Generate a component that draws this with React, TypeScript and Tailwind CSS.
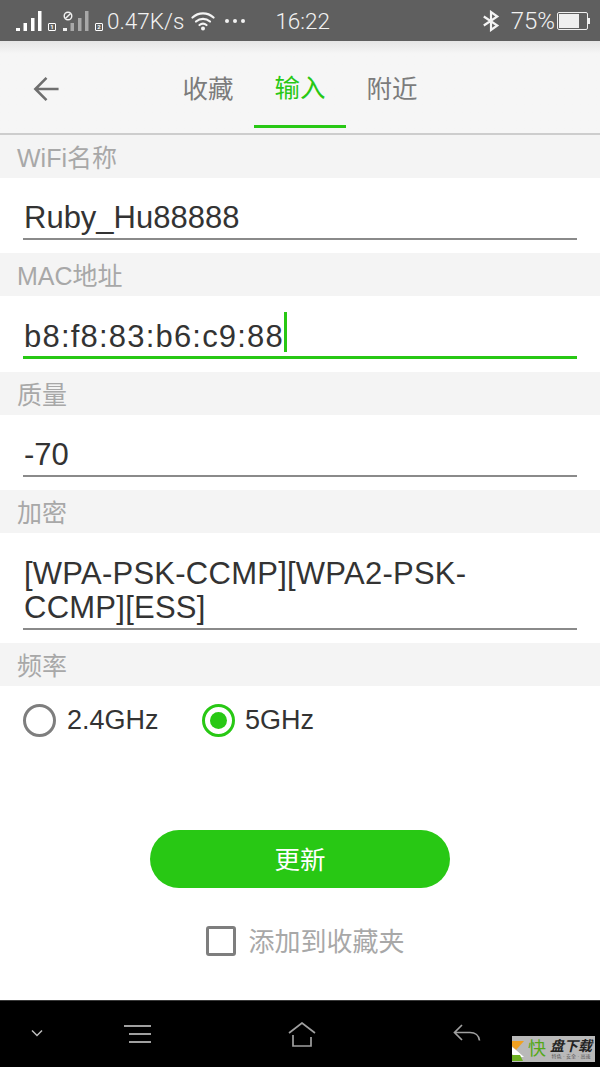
import React from 'react';

const sans = 'font-["Liberation_Sans","Noto_Sans_CJK_SC",sans-serif]';

function Signal({ light }: { light?: boolean }) {
  const c = light ? '#a8a8a8' : '#ffffff';
  return (
    <svg width="26" height="20" viewBox="0 0 26 20">
      <rect x="0" y="17" width="4" height="3" fill={light ? '#f0f0f0' : c} />
      <rect x="7.5" y="12" width="3.5" height="8" fill={c} />
      <rect x="15" y="7" width="3.5" height="13" fill={c} />
      <rect x="22" y="0" width="3.5" height="20" fill={c} />
    </svg>
  );
}

function SimBadge({ n }: { n: string }) {
  return (
    <span className="ml-[6px] flex h-[8px] w-[8px] items-center justify-center self-end rounded-[1px] border border-white text-[6px] font-bold leading-none text-white">
      {n}
    </span>
  );
}

function StatusBar() {
  return (
    <div className='relative flex h-[41px] shrink-0 items-center bg-[#5f5f5f] pl-[16px] pr-[10px] font-["Roboto",sans-serif] font-light text-[#f2f2f2]'>
      <div className="flex items-end">
        <Signal />
        <SimBadge n="1" />
      </div>
      <div className="relative ml-[7px] flex items-end">
        <Signal light />
        <SimBadge n="2" />
        <svg className="absolute left-0 top-0" width="10" height="10" viewBox="0 0 10 10" fill="none" stroke="#f2f2f2" strokeWidth="1.4">
          <circle cx="5" cy="5" r="3.8" />
          <path d="M2.4 7.6 7.6 2.4" />
        </svg>
      </div>
      <span className="ml-[4px] pt-[1px] text-[22.5px] leading-none">0.47K/s</span>
      <svg className="ml-[7px]" width="24" height="20" viewBox="0 0 24 20" fill="none" stroke="#f4f4f4" strokeWidth="2.2" strokeLinecap="round">
        <path d="M1.5 6.5C7.5 1 16.5 1 22.5 6.5" />
        <path d="M5 10.5c4.2-3.6 9.8-3.6 14 0" />
        <path d="M8.5 14c2.2-1.8 4.8-1.8 7 0" />
        <circle cx="12" cy="17.5" r="2" fill="#f4f4f4" stroke="none" />
      </svg>
      <div className="ml-[10px] flex gap-[4px]">
        <span className="h-[4px] w-[4px] rounded-full bg-[#f2f2f2]" />
        <span className="h-[4px] w-[4px] rounded-full bg-[#f2f2f2]" />
        <span className="h-[4px] w-[4px] rounded-full bg-[#f2f2f2]" />
      </div>
      <span className="ml-[30px] pt-[1px] text-[22.5px] leading-none">16:22</span>
      <svg className="ml-auto" width="18" height="22" viewBox="0 0 20 22" fill="none" stroke="#f4f4f4" strokeWidth="2.4">
        <path d="M2 6l15 10-7 5V1l7 5L2 16" />
      </svg>
      <span className="ml-[11px] pt-[1px] text-[24px] leading-none">75%</span>
      <div className="ml-[2px] flex items-center">
        <div className="flex h-[18px] w-[31px] items-stretch rounded-[2px] border border-[#f0f0f0] p-[1px]">
          <div className="w-[20px] bg-[#efefef]" />
        </div>
        <div className="h-[6px] w-[2px] bg-[#f0f0f0]" />
      </div>
    </div>
  );
}

function Tabs() {
  return (
    <div className="flex h-[94px] shrink-0 border-b-2 border-[#cdcdcd] bg-gradient-to-b from-[#e6e6e6] via-[#f6f6f6] via-[14%] to-[#f6f6f6]">
      <div className="flex w-[94px] items-center pl-[33px] pt-[3px]">
        <svg width="27" height="26" viewBox="0 0 28 28" fill="none" stroke="#6f6f6f" strokeWidth="2.8">
          <path d="M27 14H2.5M14 2 2 14l12 12" />
        </svg>
      </div>
      <div className="flex items-stretch pb-[5px] pl-[68px] text-[25.5px] leading-none">
        <div className="flex w-[92px] items-center justify-center pt-[11px] text-[#7c7c7c]">收藏</div>
        <div className="flex w-[92px] items-center justify-center border-b-[3px] border-[#28c814] pt-[11px] text-[#28c814]">输入</div>
        <div className="flex w-[92px] items-center justify-center pt-[11px] text-[#7c7c7c]">附近</div>
      </div>
    </div>
  );
}

function Label({ children }: { children: React.ReactNode }) {
  return (
    <div className="flex h-[43px] items-center bg-[#f4f4f4] pl-[17px] pt-[3px] text-[25px] leading-none text-[#a8a8a8]">
      {children}
    </div>
  );
}

function Field({ h, focused, children }: { h: string; focused?: boolean; children: React.ReactNode }) {
  return (
    <div className={`bg-white px-[23px] pb-[13px] ${h}`}>
      <div className={`flex h-full items-end pl-[1px] text-[31px] leading-[34px] text-[#333333] ${focused ? 'border-b-[3px] border-[#28c814] pb-[2px]' : 'border-b-2 border-[#8a8a8a] pb-[3px]'}`}>
        {children}
      </div>
    </div>
  );
}

function NavBar() {
  return (
    <div className="relative flex h-[67px] shrink-0 items-start border-t border-[#3a3a3a] bg-black">
      <svg className="ml-[31px] mt-[28px]" width="12" height="8" viewBox="0 0 12 8" fill="none" stroke="#bdbdbd" strokeWidth="1.5">
        <path d="M1 1.5 6 6.5l5-5" />
      </svg>
      <svg className="ml-[81px] mt-[24px]" width="27" height="18" viewBox="0 0 27 18" fill="none" stroke="#a0a0a0" strokeWidth="1.8">
        <path d="M0 1h27M5 9h22M5 17h22" />
      </svg>
      <svg className="ml-[137px] mt-[21px]" width="28" height="25" viewBox="0 0 28 25" fill="none" stroke="#a0a0a0" strokeWidth="1.7">
        <path d="M1 11 14 1l13 10M5 13v11h18v-9" />
      </svg>
      <svg className="ml-[137px] mt-[23px]" width="28" height="18" viewBox="0 0 28 18" fill="none" stroke="#a0a0a0" strokeWidth="1.7">
        <path d="M9 1 1.5 8.5 9 16M1.5 8.5H17c5 0 9 3 9.5 8" />
      </svg>
      <div className="absolute left-[512px] top-[35px] flex h-[26px] w-[83px] items-center bg-[#b9b9b9]">
        <svg className="shrink-0" width="12" height="26" viewBox="0 0 12 26">
          <path d="M0 5h12L4 14 0 10z" fill="#f0a020" />
          <path d="M0 11l4 3 8 7H3l-3-3z" fill="#ffffff" />
          <path d="M0 19h8l3 6H0z" fill="#6cb020" />
        </svg>
        <span className="ml-[4px] text-[18px] leading-none text-[#54a818]">快</span>
        <div className="ml-[4px] flex flex-col items-center">
          <span className="text-[14px] font-bold italic leading-[14px] text-[#222222]">盘下载</span>
          <span className="whitespace-nowrap text-[5px] leading-[7px] text-[#555555]">特色 · 安全 · 高速</span>
        </div>
      </div>
    </div>
  );
}

export default function App() {
  return (
    <div className={`flex h-[1067px] w-[600px] flex-col overflow-hidden bg-white ${sans}`}>
      <StatusBar />
      <Tabs />
      <Label>WiFi名称</Label>
      <Field h="h-[75px]">Ruby_Hu88888</Field>
      <Label>MAC地址</Label>
      <Field h="h-[76px]" focused>
        <span className="tracking-[1.2px]">b8:f8:83:b6:c9:88</span>
        <span className="mb-[2px] h-[40px] w-[3px] bg-[#28c814]" />
      </Field>
      <Label>质量</Label>
      <Field h="h-[75px]">-70</Field>
      <Label>加密</Label>
      <Field h="h-[110px]">
        <span className="tracking-[0.25px]">
          [WPA-PSK-CCMP][WPA2-PSK-
          <br />
          CCMP][ESS]
        </span>
      </Field>
      <Label>频率</Label>

      <div className="flex h-[68px] items-center pl-[23px] text-[27px] leading-none text-[#333333]">
        <span className="h-[33px] w-[33px] rounded-full border-[3.5px] border-[#7e7e7e]" />
        <span className="ml-[11px] w-[91px] pt-[1px]">2.4GHz</span>
        <span className="ml-[44px] flex h-[33px] w-[33px] items-center justify-center rounded-full border-[3.5px] border-[#28c814]">
          <span className="h-[17px] w-[17px] rounded-full bg-[#28c814]" />
        </span>
        <span className="ml-[10px] pt-[1px]">5GHz</span>
      </div>

      <div className="flex flex-1 flex-col items-center pt-[76px]">
        <div className="flex h-[58px] w-[300px] items-center justify-center rounded-full bg-[#28c814] pt-[4px] text-[25.5px] leading-none text-white">
          更新
        </div>
        <div className="mt-[38px] flex items-center pl-[11px]">
          <span className="h-[30px] w-[30px] rounded-[3px] border-[3.5px] border-[#7e7e7e]" />
          <span className="ml-[12px] pt-[1px] text-[26px] leading-none text-[#a8a8a8]">添加到收藏夹</span>
        </div>
      </div>
      <NavBar />
    </div>
  );
}
